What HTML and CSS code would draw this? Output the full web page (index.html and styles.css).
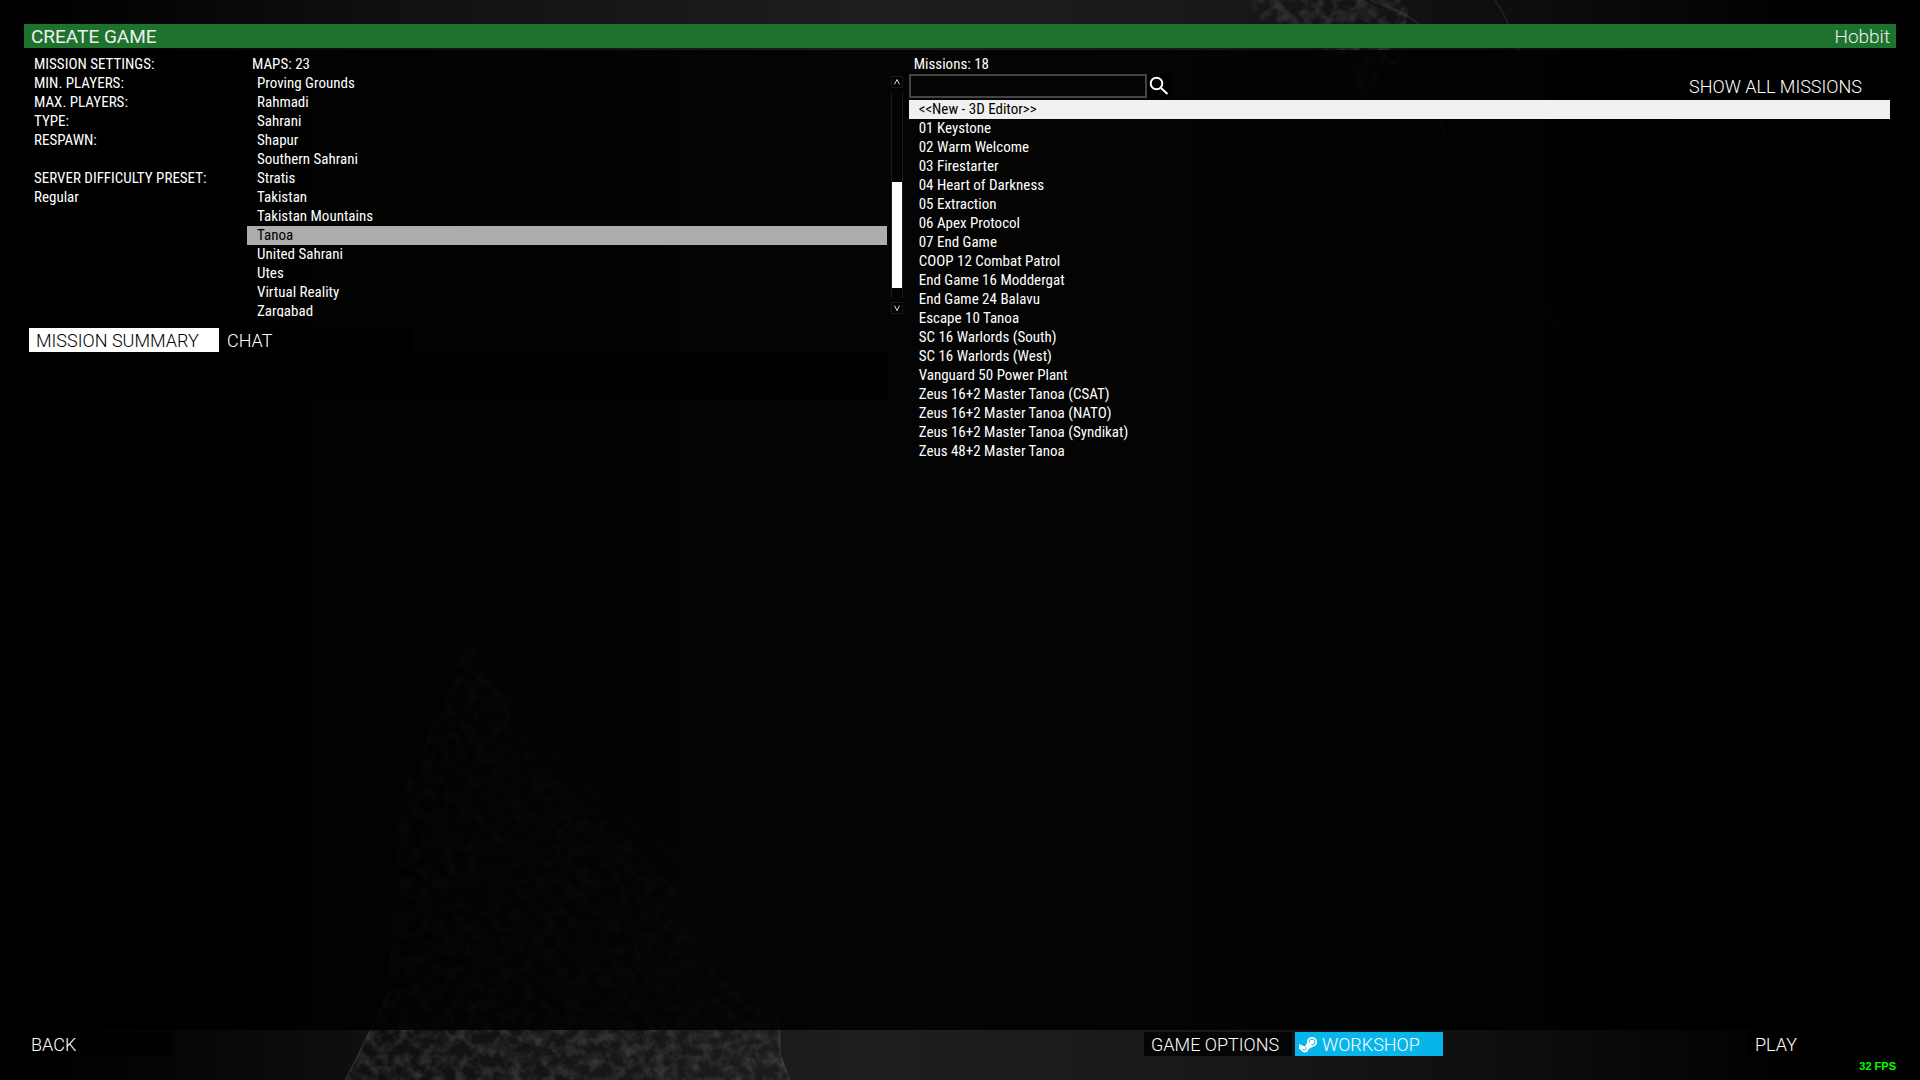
FILE: index.html
```html
<!DOCTYPE html>
<html lang="en">
<head>
    <meta charset="UTF-8">
    <meta name="viewport" content="width=device-width, initial-scale=1.0">
    <title>Create Game</title>
    <link rel="stylesheet" href="styles.css">
</head>
<body>

    <!-- satellite map behind the panels -->
    <svg class="backdrop" viewBox="0 0 1920 1080" preserveAspectRatio="xMidYMid slice" aria-hidden="true">
        <defs>
            <filter id="ground" x="0" y="0" width="100%" height="100%">
                <feTurbulence type="fractalNoise" baseFrequency="0.09" numOctaves="5" seed="7"/>
                <feColorMatrix values="0 0 0 0 0.4  0 0 0 0 0.4  0 0 0 0 0.4  1.6 0 0 0 -0.6"/>
                <feComposite in2="SourceGraphic" operator="in"/>
            </filter>
        </defs>
        <path class="land" filter="url(#ground)" d="M470 640 L545 770 L640 850 L690 905 L705 960 L745 1000 L780 1020 L781 1055 L790 1080 L345 1080 L370 1030 L388 990 L400 800 Z"/>
        <path class="land" filter="url(#ground)" d="M1245 0 L1262 20 L1300 38 L1345 60 L1365 100 L1400 60 L1410 0 Z"/>
        <path class="shore" d="M325 530 L390 600 L480 680 L540 725 L565 770 L620 815 L680 860 L690 905 L705 945 L740 985 L779 1020 L780 1055 L790 1080"/>
        <path class="shore" d="M345 1080 C365 1045 370 1025 388 1000 C388 975 375 960 350 935"/>
        <path class="shore" d="M1370 0 C1400 10 1430 25 1432 45 M1495 0 C1510 20 1515 50 1545 110 M1440 120 C1465 190 1490 240 1560 330"/>
    </svg>

    <header class="title-bar">
        <h1>CREATE GAME</h1>
        <span>Hobbit</span>
    </header>

    <main class="panel">
        <section class="left">
            <div class="setup">
                <div class="settings">
                    <p>MISSION SETTINGS:</p>
                    <p>MIN. PLAYERS:</p>
                    <p>MAX. PLAYERS:</p>
                    <p>TYPE:</p>
                    <p>RESPAWN:</p>
                    <p class="preset">SERVER DIFFICULTY PRESET:</p>
                    <p>Regular</p>
                </div>
                <div class="maps">
                    <h2 id="mapsTitle">MAPS: 23</h2>
                    <ul class="list map-list" role="listbox" aria-labelledby="mapsTitle">
                        <li role="option">Proving Grounds</li>
                        <li role="option">Rahmadi</li>
                        <li role="option">Sahrani</li>
                        <li role="option">Shapur</li>
                        <li role="option">Southern Sahrani</li>
                        <li role="option">Stratis</li>
                        <li role="option">Takistan</li>
                        <li role="option">Takistan Mountains</li>
                        <li role="option" class="selected" aria-selected="true">Tanoa</li>
                        <li role="option">United Sahrani</li>
                        <li role="option">Utes</li>
                        <li role="option">Virtual Reality</li>
                        <li role="option">Zargabad</li>
                    </ul>
                </div>
                <div class="scrollbar">
                    <button type="button" class="arrow" aria-label="Scroll up">
                        <svg viewBox="0 0 12 12"><path d="M3 9 L6 3 L9 9"/></svg>
                    </button>
                    <div class="track"><div class="thumb"></div></div>
                    <button type="button" class="arrow" aria-label="Scroll down">
                        <svg viewBox="0 0 12 12"><path d="M3 3 L6 9 L9 3"/></svg>
                    </button>
                </div>
            </div>
            <div class="tabs">
                <button type="button" class="tab active">MISSION SUMMARY</button>
                <button type="button" class="tab">CHAT</button>
            </div>
            <div class="summary"></div>
        </section>

        <section class="right">
            <h2 id="missionsTitle">Missions: 18</h2>
            <form class="search">
                <input type="text" class="search-field" aria-label="Search missions">
                <button type="button" class="search-btn" aria-label="Search">
                    <svg viewBox="0 0 20 20"><circle cx="7.5" cy="7.5" r="5.8"/><path d="M12 12 L18.5 18"/></svg>
                </button>
                <button type="button" class="show-all">SHOW ALL MISSIONS</button>
            </form>
            <ul class="list mission-list" role="listbox" aria-labelledby="missionsTitle">
                <li role="option" class="selected" aria-selected="true">&lt;&lt;New - 3D Editor&gt;&gt;</li>
                <li role="option">01 Keystone</li>
                <li role="option">02 Warm Welcome</li>
                <li role="option">03 Firestarter</li>
                <li role="option">04 Heart of Darkness</li>
                <li role="option">05 Extraction</li>
                <li role="option">06 Apex Protocol</li>
                <li role="option">07 End Game</li>
                <li role="option">COOP 12 Combat Patrol</li>
                <li role="option">End Game 16 Moddergat</li>
                <li role="option">End Game 24 Balavu</li>
                <li role="option">Escape 10 Tanoa</li>
                <li role="option">SC 16 Warlords (South)</li>
                <li role="option">SC 16 Warlords (West)</li>
                <li role="option">Vanguard 50 Power Plant</li>
                <li role="option">Zeus 16+2 Master Tanoa (CSAT)</li>
                <li role="option">Zeus 16+2 Master Tanoa (NATO)</li>
                <li role="option">Zeus 16+2 Master Tanoa (Syndikat)</li>
                <li role="option">Zeus 48+2 Master Tanoa</li>
            </ul>
        </section>
    </main>

    <footer class="footer">
        <div class="actions">
            <button type="button">BACK</button>
            <button type="button" class="options">GAME OPTIONS</button>
            <button type="button" class="workshop">
                <svg viewBox="0 0 18 16" aria-hidden="true">
                    <circle cx="13" cy="5" r="5" fill="#fff"/>
                    <circle cx="13" cy="5" r="3" fill="none" stroke="#08b5ea"/>
                    <path d="M0 7 L6 9.5 L9 4 L14 9.8 L9.5 12 A3.9 3.9 0 0 1 2 13 L0 12 Z" fill="#fff"/>
                    <path d="M3.6 12.2 L5.6 13 A1.7 1.7 0 0 0 6.2 9.9" fill="none" stroke="#08b5ea"/>
                </svg>
                WORKSHOP
            </button>
            <button type="button" class="play">PLAY</button>
        </div>
        <p class="fps">32 FPS</p>
    </footer>

</body>
</html>
```
FILE: styles.css
```css
* {
  box-sizing: border-box;
}

body {
  display: flex;
  flex-direction: column;
  min-height: 100vh;
  margin: 0;
  padding: 24px 24px 0;
  background: linear-gradient(90deg, #000 0%, #020202 5%, #101010 20%, #1e1e1e 45%, #1a1a1a 60%, #0d0d0d 80%, #000 94%);
  color: #fff;
  font-family: "Roboto Condensed", Roboto, sans-serif;
  font-size: 15px;
  line-height: 19px;
}

h1, h2, p, ul {
  margin: 0;
  padding: 0;
  font-size: inherit;
  font-weight: normal;
}

button {
  height: 24px;
  padding: 2px 7px 0;
  border: none;
  background-color: rgba(0, 0, 0, 0.8);
  color: #fff;
  font-family: Roboto, sans-serif;
  font-size: 18px;
  font-weight: 300;
  line-height: 22px;
  text-align: left;
  cursor: pointer;
}

/* map picture */
.backdrop {
  position: absolute;
  top: 0;
  left: 0;
  width: 100%;
  height: 100%;
  z-index: -1;
}

.land {
  opacity: 0.3;
}

.shore {
  fill: none;
  stroke: #fff;
  stroke-width: 2;
  opacity: 0.07;
}

.title-bar {
  display: flex;
  justify-content: space-between;
  padding: 1px 6px 0 7px;
  background-color: #1d722e;
  color: #f0f0f0;
  font-family: Roboto, sans-serif;
  font-size: 19px;
  font-weight: 300;
  line-height: 23px;
}

.panel {
  flex: 1;
  display: grid;
  grid-template-columns: 471fr 529fr;
  gap: 6px;
  margin: 2px -24px 0;
  padding: 5px 30px 0 29px;
  background-color: rgba(0, 0, 0, 0.84);
}

/* left column */
.setup {
  display: flex;
}

.settings {
  width: 218px;
  padding-left: 5px;
}

.preset {
  margin-top: 19px;
}

.maps {
  flex: 1;
}

.maps h2, .right h2 {
  padding-left: 5px;
}

.list {
  list-style: none;
}

.list li {
  padding-left: 10px;
}

.map-list {
  height: 243px;
  overflow: hidden;
}

.map-list .selected {
  background-color: #acacac;
  color: #000;
}

.scrollbar {
  display: flex;
  flex-direction: column;
  gap: 4px;
  width: 12px;
  margin: 21px 0 3px 4px;
}

.arrow {
  height: 12px;
  padding: 0;
  border: 1px solid #1a1a1a;
  line-height: 0;
}

.arrow svg {
  width: 10px;
  height: 10px;
  fill: none;
  stroke: #fff;
}

.track {
  flex: 1;
  border: solid #1a1a1a;
  border-width: 0 1px;
}

.thumb {
  height: 106px;
  margin-top: 90px;
  background-color: #fff;
}

.tabs {
  display: flex;
  margin-top: 11px;
}

.tab {
  width: 191px;
}

.tab.active {
  width: 190px;
  margin-right: 1px;
  background-color: #fff;
  color: #000;
}

.summary {
  height: 48px;
  margin-right: 16px;
  background-color: #000;
}

/* right column */
.search {
  display: flex;
  height: 24px;
  margin-bottom: 2px;
}

.search-field {
  width: 238px;
  padding: 0 6px;
  border: 2px solid #444;
  background-color: #050505;
  color: #fff;
  font: inherit;
}

.search-btn {
  width: 24px;
  padding: 2px;
}

.search-btn svg {
  display: block;
  width: 20px;
  height: 20px;
  fill: none;
  stroke: #fff;
  stroke-width: 2;
}

.show-all {
  margin-left: auto;
  padding-right: 28px;
}

.mission-list .selected {
  background-color: #f0f0f0;
  color: #000;
}

/* bottom bar */
.footer {
  padding-top: 2px;
}

.actions {
  display: flex;
}

.actions button {
  width: 148px;
}

.actions .options {
  margin-left: auto;
}

.actions .workshop {
  display: flex;
  align-items: center;
  gap: 5px;
  margin-left: 3px;
  padding-left: 4px;
  background-color: #08b5ea;
}

.workshop svg {
  width: 18px;
  height: 16px;
}

.actions .play {
  margin-left: 305px;
}

.fps {
  height: 24px;
  color: #0f0;
  font-family: "Liberation Sans", sans-serif;
  font-size: 11px;
  font-weight: bold;
  line-height: 20px;
  text-align: right;
}
```
